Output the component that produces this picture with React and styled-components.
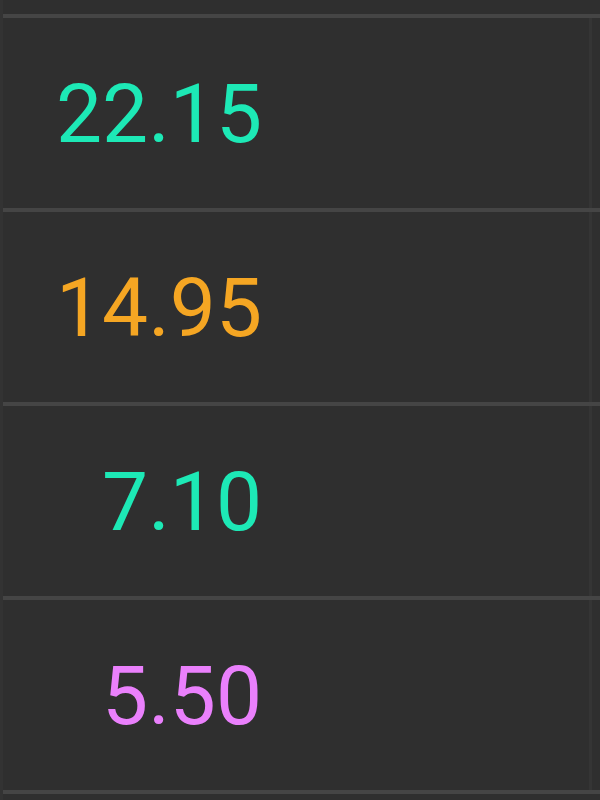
import styled, { createGlobalStyle } from 'styled-components';

const GlobalStyle = createGlobalStyle`
    html, body {
        margin: 0;
        padding: 0;
        background: #2f2f2f;
    }
`;

const rows = [
    { value: '22.15', tone: '#1de9b6' },
    { value: '14.95', tone: '#f5a623' },
    { value: '7.10', tone: '#1de9b6' },
    { value: '5.50', tone: '#ea80fc' },
];

const App = () => {
    return (
        <>
            <GlobalStyle />
            <Table>
                {rows.map((row) => (
                    <Row key={row.value}>
                        <Cell tone={row.tone}>{row.value}</Cell>
                        <Spacer />
                    </Row>
                ))}
            </Table>
        </>
    );
};

const Table = styled.div`
    width: 600px;
    height: 800px;
    box-sizing: border-box;
    padding-top: 14px;
    overflow: hidden;
    display: flex;
    flex-direction: column;
    border-left: 3px solid #333333;
`;

const Row = styled.div`
    display: flex;
    align-items: center;
    height: 190px;
    flex-shrink: 0;
    border-top: 4px solid #454545;
    &:last-child {
        border-bottom: 4px solid #454545;
    }
`;

const Cell = styled.div`
    width: 259px;
    text-align: right;
    font-family: Roboto, "Liberation Sans", sans-serif;
    font-size: 82px;
    line-height: 1;
    color: ${(p) => p.tone};
    padding-top: 2px;
`;

const Spacer = styled.div`
    flex: 1;
    align-self: stretch;
    margin-right: 8px;
    border-right: 3px solid #353535;
`;

export default App;
